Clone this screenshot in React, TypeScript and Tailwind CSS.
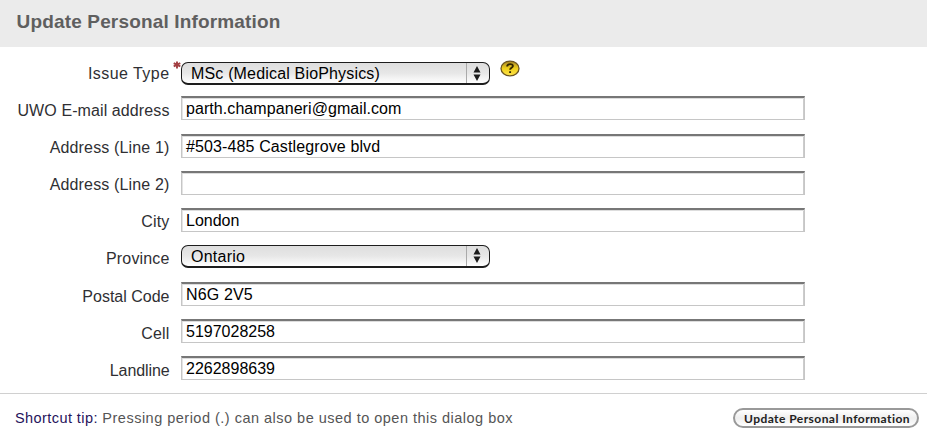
import type { ReactNode } from "react";

type LabelProps = { children: ReactNode; spacing?: string; required?: boolean };

function Label({ children, spacing = "tracking-[0.15px]", required = false }: LabelProps) {
  return (
    <span className={`relative mr-[0.5px] w-[169.5px] pt-[2.6px] text-right leading-6 whitespace-nowrap text-[#2f2f33] ${spacing}`}>
      {children}
      {required && (
        <svg className="absolute top-[2px] left-[173px]" width="8" height="8" viewBox="0 0 8 8">
          <path d="M4 .5v7M.7 2.2l6.6 3.2M7.3 2.2L.7 5.4" stroke="#a33f42" strokeWidth="1.9" />
        </svg>
      )}
    </span>
  );
}

function Row({ children }: { children: ReactNode }) {
  return <div className="flex h-[37.1px] items-start">{children}</div>;
}

function TextField({ value, spacing = "tracking-normal" }: { value: string; spacing?: string }) {
  return (
    <div className="ml-[11px] h-6 w-[624px] border border-t-2 border-[#c6c6c6] border-t-[#777] bg-white pl-[4px] leading-[21px] whitespace-nowrap text-black shadow-[inset_0_1px_0_#ddd,inset_1px_0_0_#e4e4e4,inset_-1px_0_0_#ccc]">
      <span className={spacing}>{value}</span>
    </div>
  );
}

function SelectField({ value, spacing }: { value: string; spacing: string }) {
  return (
    <div className="ml-[11px] flex h-[23px] w-[309px] overflow-hidden rounded-[7px] border-[1.5px] border-b-2 border-[#1d1d1d] bg-linear-to-b from-[#dedede] via-[#e7e7e7] to-[#fff] pl-[9px] leading-[21px] whitespace-nowrap text-black">
      <span className={`flex-1 ${spacing}`}>{value}</span>
      <span className="flex w-[23px] items-center justify-center border-l border-[#aaa] pr-[2px]">
        <svg width="8" height="15" viewBox="0 0 8 15">
          <path d="M4 0l3.5 6.5h-7zM4 15L.5 8.5h7z" fill="#1c1c1c" />
        </svg>
      </span>
    </div>
  );
}

export default function App() {
  return (
    <div className="h-[437px] w-[928px] overflow-hidden bg-white font-['Liberation_Sans',Arial,sans-serif] text-[16px]">
      <header className="h-[47px] w-[927px] bg-[#ebebeb] pt-[10px] pl-[16.5px]">
        <h1 className="text-[19px] leading-6 font-bold tracking-[0.16px] whitespace-nowrap text-[#5f5f5f]">
          Update Personal Information
        </h1>
      </header>
      <main className="h-[346px] pt-[12.35px]">
        <Row>
          <Label required spacing="tracking-[0.45px]">Issue Type</Label>
          <div className="pt-[3px]">
            <SelectField value="MSc (Medical BioPhysics)" spacing="tracking-[0.17px]" />
          </div>
          <svg className="mt-[1px] ml-[10px]" width="20" height="17" viewBox="0 0 20 17">
            <defs>
              <linearGradient id="gold" x1="0" x2="0" y1="0" y2="1">
                <stop offset="0" stopColor="#a98725" />
                <stop offset="0.5" stopColor="#efd01c" />
                <stop offset="1" stopColor="#ffe34a" />
              </linearGradient>
            </defs>
            <ellipse cx="10" cy="8.5" rx="9" ry="7.3" fill="url(#gold)" stroke="#6b5520" strokeWidth="1.3" />
            <path d="M7.2 6.5C7 3.4 13 3.3 12.9 6.1c0 1.7-2.8 1.8-2.8 3.7M10.1 11.2v1.9" fill="none" stroke="#332700" strokeWidth="1.9" />
          </svg>
        </Row>
        <Row><Label spacing="tracking-[0.1px]">UWO E-mail address</Label><TextField value="parth.champaneri@gmail.com" spacing="tracking-[0.07px]" /></Row>
        <Row><Label>Address (Line 1)</Label><TextField value="#503-485 Castlegrove blvd" spacing="tracking-[0.12px]" /></Row>
        <Row><Label>Address (Line 2)</Label><TextField value="" /></Row>
        <Row><Label>City</Label><TextField value="London" /></Row>
        <Row><Label>Province</Label><SelectField value="Ontario" spacing="tracking-[0.25px]" /></Row>
        <Row><Label spacing="tracking-[0px]">Postal Code</Label><TextField value="N6G 2V5" spacing="tracking-[0.15px]" /></Row>
        <Row><Label>Cell</Label><TextField value="5197028258" /></Row>
        <Row><Label spacing="tracking-[-0.1px]">Landline</Label><TextField value="2262898639" /></Row>
      </main>
      <footer className="flex h-[44px] w-[927px] items-start border-t border-[#d0d0d0] pr-[8px] pl-[15px]">
        <p className="flex-1 pt-[14px] text-[14.5px] leading-5 tracking-[0.49px] whitespace-nowrap text-[#555]">
          <span className="tracking-[0.42px] text-[#26145c]">Shortcut tip:</span> Pressing period (.) can also be used to open this dialog box
        </p>
        <button className="mt-[14px] h-[20px] w-[186px] rounded-full border-2 border-[#999] bg-linear-to-b from-white via-[#eee] to-white pl-[2px] font-[Lato,sans-serif] text-[12px] leading-[17px] font-bold tracking-[0.45px] whitespace-nowrap text-[#222]">
          Update Personal Information
        </button>
      </footer>
    </div>
  );
}
